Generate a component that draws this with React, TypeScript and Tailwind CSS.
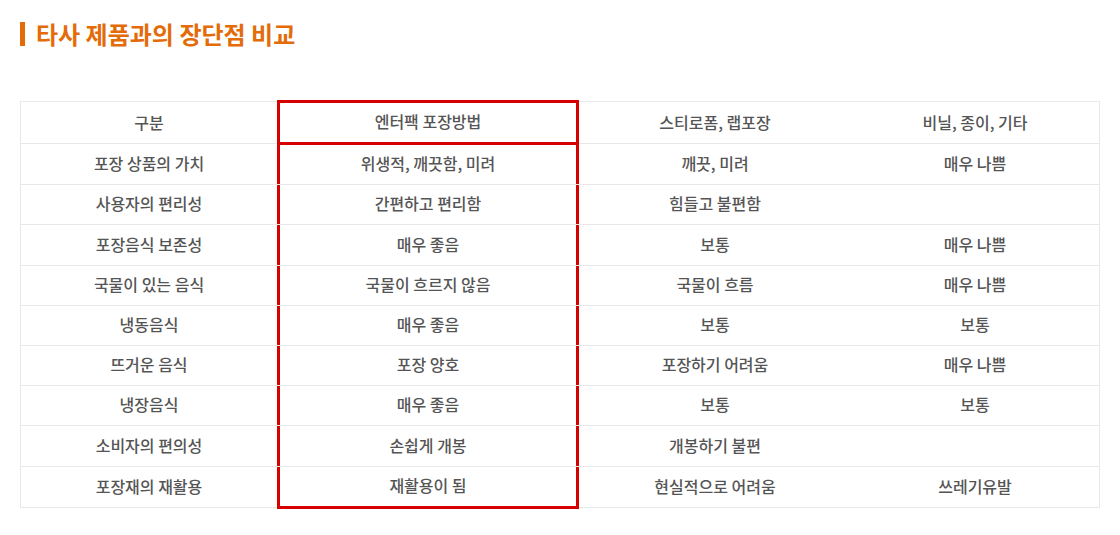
import React from "react";

const rows: { cells: string[]; h: string }[] = [
  { cells: ["포장 상품의 가치", "위생적, 깨끗함, 미려", "깨끗, 미려", "매우 나쁨"], h: "h-[41px]" },
  { cells: ["사용자의 편리성", "간편하고 편리함", "힘들고 불편함", ""], h: "h-[40px]" },
  { cells: ["포장음식 보존성", "매우 좋음", "보통", "매우 나쁨"], h: "h-[41px]" },
  { cells: ["국물이 있는 음식", "국물이 흐르지 않음", "국물이 흐름", "매우 나쁨"], h: "h-[40px]" },
  { cells: ["냉동음식", "매우 좋음", "보통", "보통"], h: "h-[40px]" },
  { cells: ["뜨거운 음식", "포장 양호", "포장하기 어려움", "매우 나쁨"], h: "h-[40px]" },
  { cells: ["냉장음식", "매우 좋음", "보통", "보통"], h: "h-[40px]" },
  { cells: ["소비자의 편의성", "손쉽게 개봉", "개봉하기 불편", ""], h: "h-[41px]" },
  { cells: ["포장재의 재활용", "재활용이 됨", "현실적으로 어려움", "쓰레기유발"], h: "h-[40px]" },
];

const grid = "grid grid-cols-[256px_302px_272px_1fr]";
const cell = "flex items-center justify-center pb-[3px]";

export default function App() {
  return (
    <div
      className="w-[1120px] h-[535px] bg-white text-[#555] overflow-hidden"
      style={{ fontFamily: '"Noto Sans CJK KR", "Noto Sans", sans-serif' }}
    >
      <div className="pt-[21px] pl-[20px] flex items-center gap-[11px]">
        <span className="w-[5px] h-[24px] bg-[#e36c09]" />
        <h2 className="text-[24px] leading-[26px] font-semibold text-[#e36c09]">
          타사 제품과의 장단점 비교
        </h2>
      </div>

      <div className="mt-[54px] ml-[20px] w-[1080px] border border-[#e8e8e8] text-[16px] font-medium">
        <div className={`${grid} h-[42px] border-b border-[#e8e8e8]`}>
          <div className={cell}>구분</div>
          <div className={`${cell} relative z-10 -mt-[2px] h-[45px] border-[3px] border-[#d70000]`}>
            엔터팩 포장방법
          </div>
          <div className={cell}>스티로폼, 랩포장</div>
          <div className={cell}>비닐, 종이, 기타</div>
        </div>
        {rows.map((r, i) => {
          const last = i === rows.length - 1;
          return (
            <div
              key={i}
              className={`${grid} ${r.h} ${last ? "" : "border-b border-[#e8e8e8]"}`}
            >
              <div className={cell}>{r.cells[0]}</div>
              <div
                className={`${cell} border-x-[3px] border-[#d70000] ${
                  last ? "border-b-[3px] h-[42px] -mb-[1px]" : ""
                }`}
              >
                {r.cells[1]}
              </div>
              <div className={cell}>{r.cells[2]}</div>
              <div className={cell}>{r.cells[3]}</div>
            </div>
          );
        })}
      </div>
    </div>
  );
}
